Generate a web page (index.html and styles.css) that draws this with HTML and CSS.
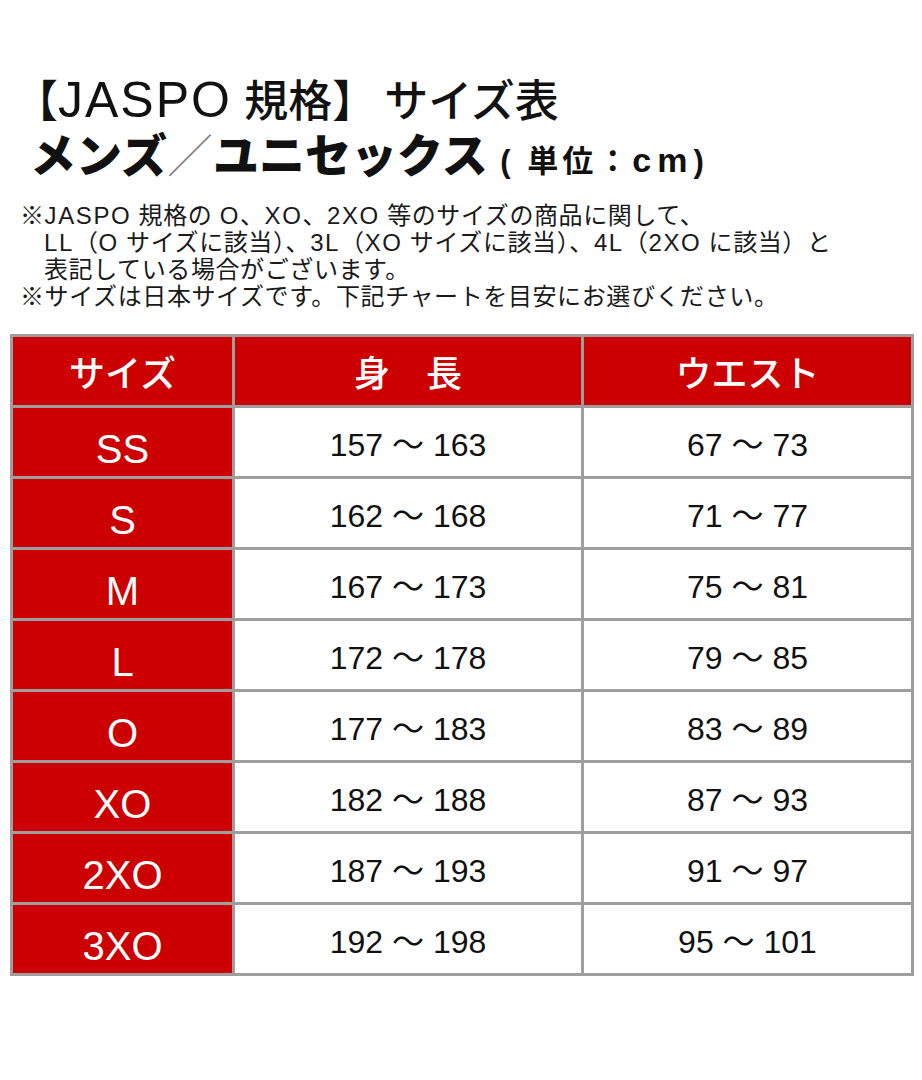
FILE: index.html
```html
<!DOCTYPE html>
<html lang="ja">
<head>
<meta charset="utf-8">
<title>JASPO規格 サイズ表</title>
<link rel="stylesheet" href="styles.css">
</head>
<body>
<div class="page">
  <header class="title">
    <h1 class="title-line1"><span class="bracket">【</span><span class="lat">JASPO</span> 規格】<span class="sub">サイズ表</span></h1>
    <h2 class="title-line2">メンズ<span class="slash">／</span>ユニセックス<span class="unit"> ( 単位：<span class="cm">cm</span>)</span></h2>
  </header>
  <div class="notes">
    <p class="note">※<span class="nl">JASPO</span> 規格の <span class="nl">O</span>、<span class="nl">XO</span>、<span class="nl">2XO</span> 等のサイズの商品に関して、<br><span class="nl">LL</span>（<span class="nl">O</span> サイズに該当）、<span class="nl">3L</span>（<span class="nl">XO</span> サイズに該当）、<span class="nl">4L</span>（<span class="nl">2XO</span> に該当）と<br>表記している場合がございます。</p>
    <p class="note">※サイズは日本サイズです。下記チャートを目安にお選びください。</p>
  </div>
  <div class="table">
    <div class="cell head">サイズ</div>
    <div class="cell head">身　長</div>
    <div class="cell head">ウエスト</div>

    <div class="cell size">SS</div><div class="cell val">157 ～ 163</div><div class="cell val">67 ～ 73</div>
    <div class="cell size">S</div><div class="cell val">162 ～ 168</div><div class="cell val">71 ～ 77</div>
    <div class="cell size">M</div><div class="cell val">167 ～ 173</div><div class="cell val">75 ～ 81</div>
    <div class="cell size">L</div><div class="cell val">172 ～ 178</div><div class="cell val">79 ～ 85</div>
    <div class="cell size">O</div><div class="cell val">177 ～ 183</div><div class="cell val">83 ～ 89</div>
    <div class="cell size">XO</div><div class="cell val">182 ～ 188</div><div class="cell val">87 ～ 93</div>
    <div class="cell size">2XO</div><div class="cell val">187 ～ 193</div><div class="cell val">91 ～ 97</div>
    <div class="cell size">3XO</div><div class="cell val">192 ～ 198</div><div class="cell val">95 ～ 101</div>
  </div>
</div>
</body>
</html>
```

FILE: styles.css
```css
html, body {
  margin: 0;
  padding: 0;
  background: #ffffff;
}

body {
  font-family: "Liberation Sans", "Noto Sans CJK JP", sans-serif;
  color: #111111;
}

.page {
  width: 922px;
  padding-top: 73px;
}

.title {
  padding-left: 30px;
}

.title-line1,
.title-line2 {
  margin: 0;
  line-height: 55px;
  white-space: nowrap;
}

.title-line1 {
  font-size: 44px;
  font-weight: 500;
}

.bracket {
  display: inline-block;
  margin-left: -16px;
}

.lat {
  font-size: 50px;
  letter-spacing: 2px;
}

.sub {
  margin-left: 8px;
}

.title-line2 {
  font-size: 46px;
  font-weight: 900;
}

.slash {
  font-weight: 300;
  color: #888888;
}

.unit {
  font-size: 31px;
  font-weight: 700;
  letter-spacing: 4px;
}

.cm {
  font-size: 34px;
  letter-spacing: 6px;
}

.notes {
  margin-top: 13px;
  padding-left: 20px;
}

.note {
  margin: 0;
  font-size: 24px;
  line-height: 27px;
  letter-spacing: 0.6px;
  padding-left: 1em;
  text-indent: -1em;
  white-space: nowrap;
  color: #1a1a1a;
}

.nl {
  letter-spacing: 1.6px;
}

.table {
  margin: 24px 0 0 10px;
  width: 904px;
  box-sizing: border-box;
  display: grid;
  grid-template-columns: 219px 346px 327px;
  grid-auto-rows: 68px;
  gap: 3px;
  padding: 3px;
  background: #9e9e9e;
}

.cell {
  display: flex;
  align-items: center;
  justify-content: center;
  white-space: nowrap;
}

.head {
  background: #cc0000;
  color: #ffffff;
  font-size: 36px;
  font-weight: 500;
}

.size {
  background: #cc0000;
  color: #ffffff;
  font-size: 40px;
  font-weight: 400;
  padding-top: 14px;
  box-sizing: border-box;
}

.val {
  background: #ffffff;
  color: #111111;
  font-size: 32px;
  font-weight: 400;
}
```
